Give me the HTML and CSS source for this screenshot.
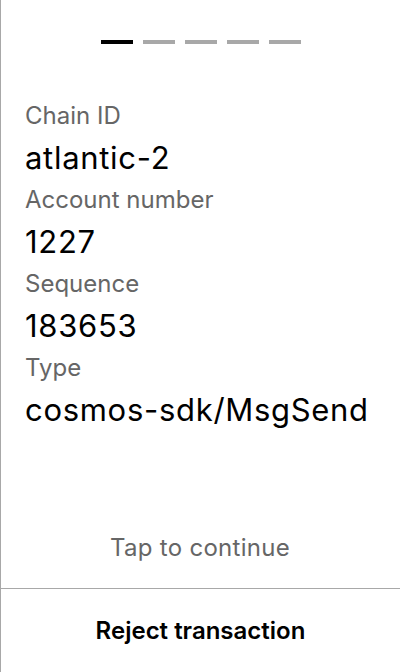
FILE: index.html
```html
<!DOCTYPE html>
<html>
<head>
<meta charset="utf-8">
<link rel="stylesheet" href="styles.css">
</head>
<body>
<div class="screen">
  <div class="main">
    <div class="steps">
      <span class="step active"></span>
      <span class="step"></span>
      <span class="step"></span>
      <span class="step"></span>
      <span class="step"></span>
    </div>
    <dl class="fields">
      <dt class="label">Chain ID</dt>
      <dd class="value">atlantic-2</dd>
      <dt class="label">Account number</dt>
      <dd class="value">1227</dd>
      <dt class="label">Sequence</dt>
      <dd class="value">183653</dd>
      <dt class="label">Type</dt>
      <dd class="value">cosmos-sdk/MsgSend</dd>
    </dl>
    <div class="spacer"></div>
    <div class="tap">Tap to continue</div>
  </div>
  <div class="footer">Reject transaction</div>
</div>
</body>
</html>
```
FILE: styles.css
```css
html, body {
  margin: 0;
  padding: 0;
  background: #fff;
}
body {
  font-family: Inter, "Noto Sans", sans-serif;
  color: #000;
}
.screen {
  width: 400px;
  height: 672px;
  box-sizing: border-box;
  border-left: 1px solid #a8a8a8;
  display: flex;
  flex-direction: column;
}
.main {
  flex: 1;
  display: flex;
  flex-direction: column;
  padding: 40px 0 0 24px;
}
.steps {
  display: flex;
  gap: 10px;
  justify-content: center;
  margin-left: -24px;
  margin-right: -1px;
}
.step {
  width: 32px;
  height: 4px;
  background: #a8a8a8;
}
.step.active {
  background: #000;
}
.fields {
  margin: 51px 0 0 0;
  padding: 0;
}
.label {
  font-size: 24px;
  line-height: 42px;
  color: #666;
  margin: 0;
}
.value {
  font-size: 31px;
  letter-spacing: 0.7px;
  line-height: 42px;
  color: #000;
  margin: 0;
}
.spacer {
  flex: 1;
}
.tap {
  text-align: center;
  font-size: 24px;
  letter-spacing: 0.3px;
  line-height: 28px;
  color: #666;
  margin: 0 0 26px -25px;
}
.footer {
  height: 83px;
  border-top: 1px solid #a8a8a8;
  display: flex;
  align-items: center;
  justify-content: center;
  font-size: 24px;
  font-weight: 600;
  color: #000;
  margin-left: -1px;
  padding-left: 1px;
}
```
